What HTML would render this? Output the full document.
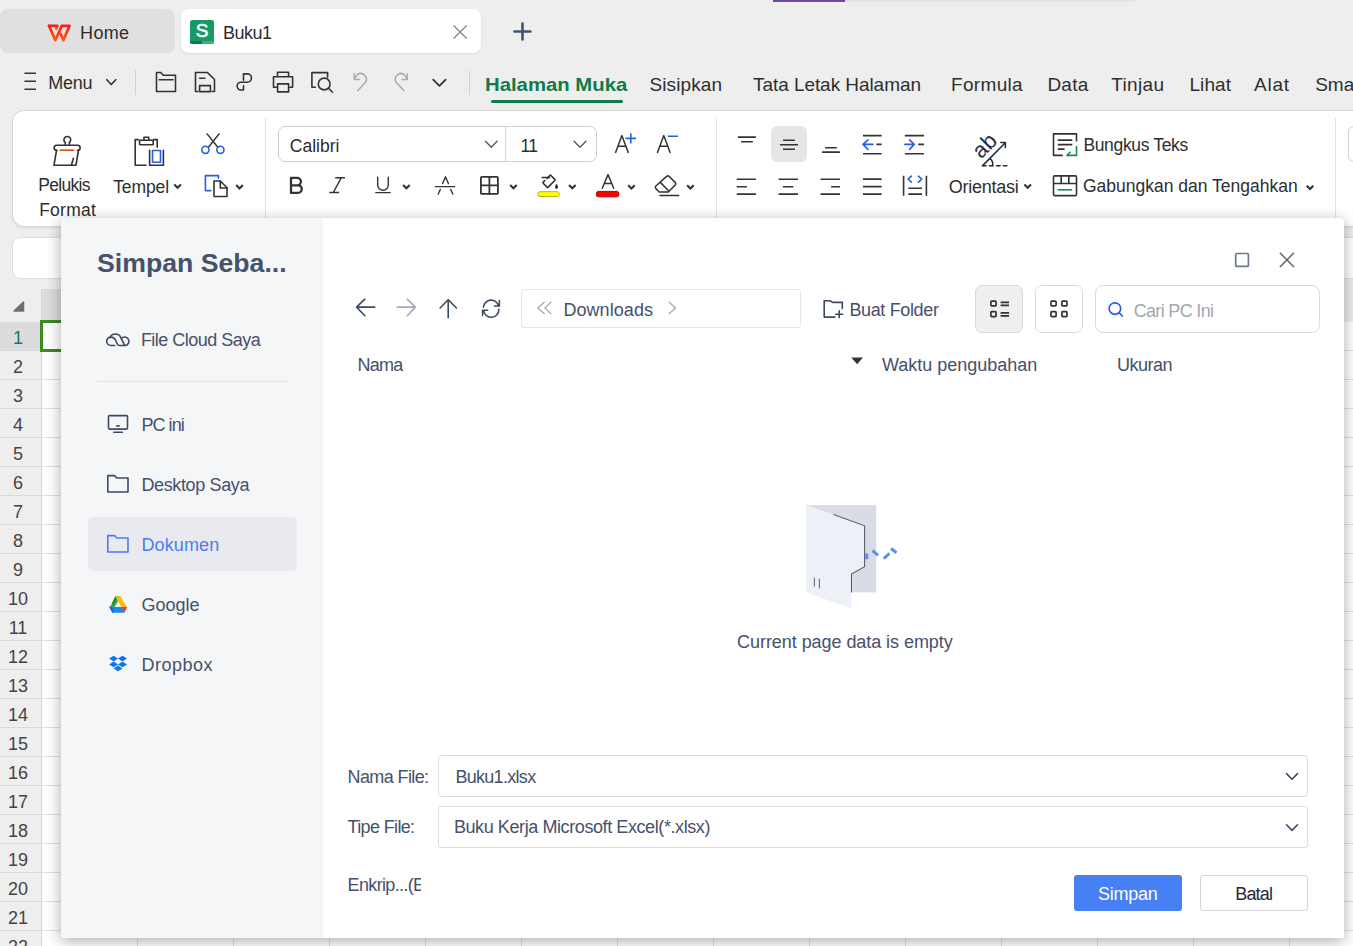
<!DOCTYPE html>
<html><head><meta charset="utf-8">
<style>
*{margin:0;padding:0;box-sizing:border-box}
html,body{width:1353px;height:946px;overflow:hidden;background:#eeeeee;font-family:"Liberation Sans",sans-serif;position:relative}
.t{position:absolute;white-space:nowrap}
.a{position:absolute}
svg{position:absolute;overflow:visible}
</style></head><body>
<!-- top progress bar -->
<div class="a" style="left:773px;top:0;width:72px;height:2px;background:#7048a8"></div>
<div class="a" style="left:845px;top:0;width:290px;height:2px;background:#e2e2e2"></div>
<!-- tabs -->
<div class="a" style="left:0;top:9px;width:175px;height:44px;background:#e0e0e0;border-radius:8px"></div>
<div class="a" style="left:181px;top:9px;width:300px;height:44px;background:#fff;border-radius:8px;box-shadow:0 1px 2px rgba(0,0,0,.08)"></div>
<!-- ribbon -->
<div class="a" style="left:12px;top:110px;width:1400px;height:117px;background:#fff;border-radius:12px;border:1px solid #d8d8d8;box-shadow:0 1px 2px rgba(0,0,0,.08)"></div>
<div class="a" style="left:265px;top:118px;width:1px;height:100px;background:#e3e3e3"></div>
<div class="a" style="left:716px;top:118px;width:1px;height:100px;background:#e3e3e3"></div>
<div class="a" style="left:1335px;top:118px;width:1px;height:100px;background:#e3e3e3"></div>
<div class="a" style="left:1348px;top:126px;width:30px;height:36px;border:1px solid #d0d0d0;border-radius:6px"></div>
<!-- font boxes -->
<div class="a" style="left:278px;top:126px;width:319px;height:36px;border:1px solid #cfcfcf;border-radius:7px;background:#fff"></div>
<div class="a" style="left:505px;top:127px;width:1px;height:34px;background:#d6d6d6"></div>
<div class="a" style="left:771px;top:126px;width:36px;height:36px;background:#e6e6e6;border-radius:6px"></div>
<!-- formula bar -->
<div class="a" style="left:12px;top:237px;width:1400px;height:42px;background:#fff;border-radius:8px;border:1px solid #dedede"></div>
<!-- sheet -->
<div class="a" style="left:0;top:289px;width:1353px;height:33px;background:#eeeeee"></div>
<div class="a" style="left:42px;top:289px;width:96px;height:33px;background:#dcdcdc"></div>
<div class="a" style="left:0;top:322px;width:42px;height:624px;background:#eeeeee"></div>
<div class="a" style="left:0;top:322px;width:42px;height:29px;background:#dcdcdc"></div>
<div class="a" style="left:42px;top:322px;width:1311px;height:624px;background:#fff;
background-image:linear-gradient(#e1e1e1 1px,transparent 1px),linear-gradient(90deg,#e1e1e1 1px,transparent 1px);
background-size:96px 29px;background-position:-1px -1px"></div>
<div class="a" style="left:41px;top:289px;width:1px;height:657px;background:#d4d4d4"></div>
<div class="a" style="left:0;top:322px;width:42px;height:624px;
background-image:linear-gradient(#d9d9d9 1px,transparent 1px);background-size:42px 29px;background-position:0 -1px"></div>
<div class="a" style="left:40px;top:320px;width:30px;height:32px;border:3px solid #3c8a22"></div>
<svg style="left:0;top:0" width="1" height="1"></svg>
<svg style="left:13px;top:301px" width="12" height="11"><path d="M10.5 1 L10.5 10 L1 10 Z" fill="#6e6e6e" stroke="#6e6e6e" stroke-width="1.5" stroke-linejoin="round"/></svg>
<div class="t" style="left:13.1px;top:329.0px;font-size:18px;line-height:18px;color:#0e7a6e;letter-spacing:0.00px;">1</div>
<div class="t" style="left:13.1px;top:358.0px;font-size:18px;line-height:18px;color:#444;letter-spacing:0.00px;">2</div>
<div class="t" style="left:13.1px;top:387.0px;font-size:18px;line-height:18px;color:#444;letter-spacing:0.00px;">3</div>
<div class="t" style="left:13.1px;top:416.0px;font-size:18px;line-height:18px;color:#444;letter-spacing:0.00px;">4</div>
<div class="t" style="left:13.1px;top:445.0px;font-size:18px;line-height:18px;color:#444;letter-spacing:0.00px;">5</div>
<div class="t" style="left:13.1px;top:474.0px;font-size:18px;line-height:18px;color:#444;letter-spacing:0.00px;">6</div>
<div class="t" style="left:13.1px;top:503.0px;font-size:18px;line-height:18px;color:#444;letter-spacing:0.00px;">7</div>
<div class="t" style="left:13.1px;top:532.0px;font-size:18px;line-height:18px;color:#444;letter-spacing:0.00px;">8</div>
<div class="t" style="left:13.1px;top:561.0px;font-size:18px;line-height:18px;color:#444;letter-spacing:0.00px;">9</div>
<div class="t" style="left:8.1px;top:590.0px;font-size:18px;line-height:18px;color:#444;letter-spacing:0.00px;">10</div>
<div class="t" style="left:8.7px;top:619.0px;font-size:18px;line-height:18px;color:#444;letter-spacing:0.00px;">11</div>
<div class="t" style="left:8.1px;top:648.0px;font-size:18px;line-height:18px;color:#444;letter-spacing:0.00px;">12</div>
<div class="t" style="left:8.1px;top:677.0px;font-size:18px;line-height:18px;color:#444;letter-spacing:0.00px;">13</div>
<div class="t" style="left:8.1px;top:706.0px;font-size:18px;line-height:18px;color:#444;letter-spacing:0.00px;">14</div>
<div class="t" style="left:8.1px;top:735.0px;font-size:18px;line-height:18px;color:#444;letter-spacing:0.00px;">15</div>
<div class="t" style="left:8.1px;top:764.0px;font-size:18px;line-height:18px;color:#444;letter-spacing:0.00px;">16</div>
<div class="t" style="left:8.1px;top:793.0px;font-size:18px;line-height:18px;color:#444;letter-spacing:0.00px;">17</div>
<div class="t" style="left:8.1px;top:822.0px;font-size:18px;line-height:18px;color:#444;letter-spacing:0.00px;">18</div>
<div class="t" style="left:8.1px;top:851.0px;font-size:18px;line-height:18px;color:#444;letter-spacing:0.00px;">19</div>
<div class="t" style="left:8.1px;top:880.0px;font-size:18px;line-height:18px;color:#444;letter-spacing:0.00px;">20</div>
<div class="t" style="left:8.1px;top:909.0px;font-size:18px;line-height:18px;color:#444;letter-spacing:0.00px;">21</div>
<div class="t" style="left:8.1px;top:938.0px;font-size:18px;line-height:18px;color:#444;letter-spacing:0.00px;">22</div>
<div class="t" style="left:80.1px;top:24.0px;font-size:18px;line-height:18px;color:#2e2e2e;letter-spacing:0.33px;">Home</div>
<div class="t" style="left:223.0px;top:24.0px;font-size:18px;line-height:18px;color:#2e2e2e;letter-spacing:-0.50px;">Buku1</div>
<div class="t" style="left:48.2px;top:74.0px;font-size:18px;line-height:18px;color:#2e2e2e;letter-spacing:-0.20px;">Menu</div>
<div class="t" style="left:485.4px;top:75.0px;font-size:19px;line-height:19px;color:#0f7b4a;letter-spacing:0.00px;font-weight:bold;transform:scaleX(1.0694);transform-origin:0.00px 0;">Halaman Muka</div>
<div class="t" style="left:649.4px;top:75.0px;font-size:19px;line-height:19px;color:#2e2e2e;letter-spacing:0.12px;">Sisipkan</div>
<div class="t" style="left:753.0px;top:75.0px;font-size:19px;line-height:19px;color:#2e2e2e;letter-spacing:-0.06px;">Tata Letak Halaman</div>
<div class="t" style="left:951.0px;top:75.0px;font-size:19px;line-height:19px;color:#2e2e2e;letter-spacing:0.33px;">Formula</div>
<div class="t" style="left:1047.4px;top:75.0px;font-size:19px;line-height:19px;color:#2e2e2e;letter-spacing:0.25px;">Data</div>
<div class="t" style="left:1111.2px;top:75.0px;font-size:19px;line-height:19px;color:#2e2e2e;letter-spacing:0.36px;">Tinjau</div>
<div class="t" style="left:1189.4px;top:75.0px;font-size:19px;line-height:19px;color:#2e2e2e;letter-spacing:0.11px;">Lihat</div>
<div class="t" style="left:1254.0px;top:75.0px;font-size:19px;line-height:19px;color:#2e2e2e;letter-spacing:0.75px;">Alat</div>
<div class="t" style="left:1315.2px;top:75.0px;font-size:19px;line-height:19px;color:#2e2e2e;letter-spacing:0.00px;">Smart</div>
<div class="t" style="left:38.2px;top:177.0px;font-size:17.5px;line-height:17.5px;color:#2e2e2e;letter-spacing:-0.67px;">Pelukis</div>
<div class="t" style="left:39.2px;top:202.0px;font-size:17.5px;line-height:17.5px;color:#2e2e2e;letter-spacing:0.24px;">Format</div>
<div class="t" style="left:113.2px;top:179.0px;font-size:17.5px;line-height:17.5px;color:#2e2e2e;letter-spacing:-0.10px;">Tempel</div>
<div class="t" style="left:289.8px;top:138.0px;font-size:17.5px;line-height:17.5px;color:#2e2e2e;letter-spacing:0.00px;">Calibri</div>
<div class="t" style="left:520.4px;top:138.0px;font-size:17.5px;line-height:17.5px;color:#2e2e2e;letter-spacing:-0.65px;">11</div>
<div class="t" style="left:948.7px;top:178.0px;font-size:18px;line-height:18px;color:#2e2e2e;letter-spacing:-0.25px;">Orientasi</div>
<div class="t" style="left:1083.4px;top:137.0px;font-size:17.5px;line-height:17.5px;color:#2e2e2e;letter-spacing:-0.34px;">Bungkus Teks</div>
<div class="t" style="left:1082.9px;top:178.0px;font-size:17.5px;line-height:17.5px;color:#2e2e2e;letter-spacing:-0.00px;">Gabungkan dan Tengahkan</div>
<svg style="left:0;top:0" width="1353" height="946" viewBox="0 0 1353 946">
<defs>
<linearGradient id="wpsg" x1="0" y1="0" x2="0" y2="1"><stop offset="0" stop-color="#ff1a1a"/><stop offset="1" stop-color="#ff5a12"/></linearGradient>
</defs>
<!-- WPS logo -->
<g fill="none" stroke="url(#wpsg)" stroke-width="2.7" stroke-linejoin="round" stroke-linecap="round">
<path d="M49 25.8 L57.3 25.8 L56.3 28.5"/>
<path d="M49 25.8 L55.3 40.2 L61.8 25.8 L69.6 25.8 L63.4 40.2 L60.6 33.8"/>
</g>
<!-- S icon -->
<rect x="190" y="20" width="24" height="24" rx="2.5" fill="#169a66"/>
<path d="M190 41 H202 V44 H192.5 A2.5 2.5 0 0 1 190 41.5 Z" fill="#0c7849"/>
<path d="M202 41 H214 V41.5 A2.5 2.5 0 0 1 211.5 44 H202 Z" fill="#3dae7f"/>
<text x="202.2" y="37.2" font-family="Liberation Sans" font-size="19" fill="#fff" stroke="#fff" stroke-width="0.6" text-anchor="middle">S</text>
<!-- tab close / plus -->
<path d="M453.6 25.4 L466.6 38.6 M466.6 25.4 L453.6 38.6" stroke="#8a8a8a" stroke-width="1.4" fill="none"/>
<path d="M522.5 23.5 V39.5 M514.5 31.5 H530.5" stroke="#3f5478" stroke-width="2.6" stroke-linecap="round" fill="none"/>

<g fill="none" stroke="#333" stroke-width="1.6" stroke-linejoin="round" stroke-linecap="round">
<!-- hamburger -->
<path d="M24.5 73.3 H36 M24.5 81.3 H36 M24.5 89.2 H36" stroke-linecap="butt"/>
<path d="M106.8 79.7 L111.3 84.5 L115.8 79.7"/>
<!-- folder -->
<path d="M156.5 72.5 H160.8 L163.3 75.3 H175.5 V91.5 H156.5 Z"/>
<path d="M159.2 79.7 H173"/>
<!-- save -->
<path d="M198 91.5 H195.5 V72.5 H207.5 L214.5 79.5 V91.5 H212"/>
<path d="M199.6 78.3 H204.8"/>
<rect x="199.6" y="85.6" width="10.8" height="6"/>
<!-- route -->
<path d="M243.5 80.2 V73.9 H247.3 A4.15 4.15 0 0 1 247.3 82.2 H241 A3.9 3.9 0 0 0 241 90 H243.5 V85.8"/>
<!-- printer -->
<path d="M277.5 76.5 V72.3 H288.6 V76.5"/>
<path d="M276.5 87.3 H273.5 V76.8 H292.6 V87.3 H289.6"/>
<rect x="277.6" y="83.9" width="11" height="8"/>
<!-- preview -->
<path d="M327.6 77.2 V72.6 H311.9 V87.3 H315.3"/>
<circle cx="324.2" cy="84" r="5.9"/>
<path d="M328.5 88.3 L332.5 92.2"/>
<!-- more chevron -->
<path d="M433.2 79.6 L439.4 85.8 L445.6 79.6" stroke-width="1.8"/>
</g>
<!-- undo / redo -->
<g fill="none" stroke="#aaaaaa" stroke-width="1.5" stroke-linecap="round" stroke-linejoin="round">
<path d="M357.8 90.6 L365.3 82.4 A5.6 5.6 0 0 0 357.5 74.6 L354.6 78.2"/>
<path d="M354.3 73.8 V79.4 H359.5"/>
<path d="M403.8 90.6 L396.3 82.4 A5.6 5.6 0 0 1 404.1 74.6 L407 78.2"/>
<path d="M407.3 73.8 V79.4 H402.1"/>
</g>
<rect x="135" y="70" width="1" height="25" fill="#d2d2d2"/>
<rect x="469" y="70.5" width="1" height="24" fill="#d2d2d2"/>
<rect x="491" y="100" width="132" height="3" rx="1.5" fill="#0f7b4a"/>

<!-- ===== ribbon ===== -->
<g fill="none" stroke="#333" stroke-width="1.6" stroke-linejoin="round" stroke-linecap="round">
<!-- brush -->
<path d="M65.3 145.2 V142.6 A3.4 3.4 0 1 1 69.3 142.6 V145.2"/>
<path d="M57 150.3 H56.7 A2.55 2.55 0 0 1 56.7 145.2 H77.6 A2.55 2.55 0 0 1 77.6 150.3 H77.3"/>
<path d="M56.5 150.5 L54 165.2 H76 L78.4 150.5"/>
<path d="M73.4 158.2 L71.4 165"/>
<!-- paste -->
<path d="M138.6 139.6 H135.2 V165.2 H146"/>
<path d="M153.5 139.6 H157.2 V147.3"/>
<path d="M144 140.3 V137.2 H148.8 V140.3"/>
<rect x="139.6" y="140.3" width="13.6" height="4.4" rx="0.8"/>
<path d="M149.6 150.2 V165.2 H163.4 V150.2"/>
<!-- scissors lines -->
<path d="M207.1 133.9 L217.8 147.2 M219.1 133.9 L208.4 147.2" stroke-width="1.5"/>
<!-- copy doc -->
<path d="M214 181 H220.3 L227 187.7 V196.5 H214 Z"/>
<path d="M220.3 181 V188 H227"/>
<!-- small chevrons -->
<path d="M174.30 184.40 L177.60 187.70 L180.90 184.40" stroke-width="2.1" stroke-linecap="butt" stroke-linejoin="miter"/>
<path d="M236.25 185.10 L239.55 188.40 L242.85 185.10" stroke-width="2.1" stroke-linecap="butt" stroke-linejoin="miter"/>
</g>
<g fill="none" stroke="#2b5ce6" stroke-width="1.6" stroke-linejoin="round" stroke-linecap="round">
<rect x="152.5" y="150.5" width="8" height="11.8" stroke-linecap="butt"/>
<circle cx="205.4" cy="149.8" r="3.6"/>
<circle cx="220.4" cy="149.8" r="3.6"/>
<path d="M218.4 178.3 V175.6 H205.4 V190.6 H210.8"/>
</g>
<path d="M59.6 150.2 H74.2" stroke="#d9531e" stroke-width="1.7"/>

<!-- font box chevrons -->
<g fill="none" stroke="#555" stroke-width="1.3" stroke-linejoin="round" stroke-linecap="round">
<path d="M485.5 141.3 L491.3 147.3 L497.1 141.3"/>
<path d="M574 141.3 L580 147.3 L586 141.3"/>
</g>
<g fill="none" stroke="#333" stroke-width="1.5" stroke-linejoin="round" stroke-linecap="round">
<!-- A+ A- -->
<path d="M615.6 152.4 L621.9 135.6 L628.2 152.4 M618 146.3 H625.8"/>
<path d="M657.5 152.4 L663.8 135.6 L670.1 152.4 M659.9 146.3 H667.7"/>
<!-- B -->
<path d="M291 177.9 H297.2 A3.7 3.7 0 0 1 297.2 185.3 H291 Z M291 185.3 H298 A3.8 3.8 0 0 1 298 192.9 H291 Z" stroke-width="2.3"/>
<!-- I -->
<path d="M335.2 177.8 H345 M329.3 192.5 H339.1 M341.2 177.8 L333.3 192.5" stroke-width="1.4" stroke-linecap="butt"/>
<!-- U -->
<path d="M377.7 177.2 V185 A5.3 5.3 0 0 0 388.3 185 V177.2" stroke-width="1.4"/>
<path d="M375.8 192.6 H390.2" stroke-width="1.4"/>
<path d="M403.10 184.90 L406.40 188.20 L409.70 184.90" stroke-width="2.1" stroke-linecap="butt" stroke-linejoin="miter"/>
<!-- strike A -->
<path d="M442.6 183.6 L445.5 176.8 L448.4 183.6 M440.3 189.5 L438.2 194 M450.7 189.5 L452.8 194" stroke-width="1.4"/>
<path d="M435.3 186.6 H454.6" stroke-width="1.4"/>
<!-- grid -->
<rect x="480.9" y="176.9" width="17" height="17" rx="1" stroke-width="1.8"/>
<path d="M489.4 177 V194 M481 185.4 H497.8" stroke-width="1.8"/>
<path d="M510.15 184.90 L513.45 188.20 L516.75 184.90" stroke-width="2.1" stroke-linecap="butt" stroke-linejoin="miter"/>
<!-- bucket -->
<path d="M-3.5 -0.6 V-4.7 A0.8 0.8 0 0 1 -2.7 -5.5 H2.7 A0.8 0.8 0 0 1 3.5 -4.7 V4.7 A0.8 0.8 0 0 1 2.7 5.5 H-2.7 A0.8 0.8 0 0 1 -3.5 4.7 V2.4" transform="translate(549 181.3) rotate(45)" stroke-width="1.6"/>
<path d="M542.2 177.6 H549.6" stroke-width="1.5"/>
<path d="M556.5 183.8 C555.4 185.4 555 186.3 555 187.2 A1.5 1.5 0 0 0 558 187.2 C558 186.3 557.6 185.4 556.5 183.8 Z" fill="#333" stroke="none"/>
<path d="M569.00 184.90 L572.30 188.20 L575.60 184.90" stroke-width="2.1" stroke-linecap="butt" stroke-linejoin="miter"/>
<!-- font color A -->
<path d="M602.3 188.3 L608 174.6 L613.7 188.3 M604.3 183.6 H611.7"/>
<path d="M628.15 185.20 L631.45 188.50 L634.75 185.20" stroke-width="2.1" stroke-linecap="butt" stroke-linejoin="miter"/>
<!-- eraser -->
<path d="M666.6 176.4 A1.8 1.8 0 0 1 669.2 176.4 L675.2 182.4 A1.8 1.8 0 0 1 675.2 185 L668.3 192 H659.3 L655.9 188.6 A1.8 1.8 0 0 1 655.9 186 Z"/>
<path d="M660.8 182.9 L668.6 190.8"/>
<path d="M660 195.6 H678.7"/>
<path d="M687.10 185.20 L690.40 188.50 L693.70 185.20" stroke-width="2.1" stroke-linecap="butt" stroke-linejoin="miter"/>
</g>
<path d="M625.6 138.4 H636 M630.8 133.3 V143.5 M667.8 136.3 H678" stroke="#2b5ce6" stroke-width="1.6" fill="none"/>
<rect x="537.8" y="191.7" width="21.6" height="4.8" rx="2.2" fill="#ffff00" stroke="#b8b800" stroke-width="1"/>
<rect x="596.4" y="191.4" width="22.4" height="5.4" rx="2" fill="#ff0000" stroke="#b80000" stroke-width="1"/>

<!-- alignment -->
<g fill="none" stroke="#333" stroke-width="1.6" stroke-linecap="butt">
<path d="M738 137.1 H755.9 M741.1 141.7 H752.9"/>
<path d="M783 140.2 H794.9 M779.9 144.7 H798 M783 149.3 H794.9"/>
<path d="M825.1 147.7 H836.9 M822 152.1 H840"/>
<path d="M863 135.6 H881.6 M876.3 144.4 H881.6 M863 153.7 H881.6"/>
<path d="M904.8 135.6 H923.9 M918.2 144.4 H923.9 M904.8 153.7 H923.9"/>
<path d="M736.7 179.2 H755.9 M736.7 186.7 H746.9 M736.7 194.1 H755.9"/>
<path d="M778.6 179.2 H798 M783 186.7 H793.4 M778.6 194.1 H798"/>
<path d="M820.6 179.2 H840 M831.1 186.7 H840 M820.6 194.1 H840"/>
<path d="M863 179.1 H881.6 M863 186.6 H881.6 M863 194.1 H881.6"/>
<path d="M903.6 175.8 V195.7 M926.4 175.8 V195.7 M908.3 188.3 H922 M908.3 194.1 H922"/>
</g>
<g fill="none" stroke="#2b5ce6" stroke-width="1.6" stroke-linejoin="round" stroke-linecap="round">
<path d="M872.9 144.4 H863 M868 139.9 L863 144.4 L868 149.4"/>
<path d="M904.8 144.4 H914.2 M909.6 139.9 L914.2 144.4 L909.6 149.4"/>
<path d="M911.4 176.2 L908 179.1 L911.4 182.1 M918.4 176.2 L921.8 179.1 L918.4 182.1"/>
</g>
<!-- orientation -->
<g fill="none" stroke="#1f2a3c" stroke-width="1.5" stroke-linecap="round" stroke-linejoin="round">
<path d="M982.6 165.6 L1005.3 142.8 M1000.8 142.5 H1005.4 V147.4"/>
<path d="M990 158.6 A7 7 0 0 1 992.6 165.6"/>
<path d="M982.5 165.8 H986 M989.6 165.8 H993 M996.6 165.8 H1000 M1003.4 165.8 H1006.8" stroke-width="1.6"/>
</g>
<text x="0" y="0" font-family="Liberation Sans" font-size="22" fill="#1f2a3c" transform="translate(981 159.5) rotate(-45)">ab</text>
<!-- wrap -->
<g fill="none" stroke="#333" stroke-width="1.6" stroke-linejoin="round">
<path d="M1076.5 141.5 V133.9 H1053.5 V155.4 H1062.8"/>
<path d="M1057.8 140.1 H1072.3 M1057.8 144.6 H1072.3 M1057.8 149.1 H1064.6"/>
<rect x="1053.5" y="175.9" width="23" height="19.7" rx="1"/>
<path d="M1053.5 183.5 H1076.5 M1061.2 175.9 V183.5 M1068.8 175.9 V183.5"/>
<path d="M1306.70 185.70 L1310.00 189.00 L1313.30 185.70" stroke-width="2.1" stroke-linecap="butt" stroke-linejoin="miter"/>
<path d="M1024.40 184.50 L1027.70 187.80 L1031.00 184.50" stroke-width="2.1" stroke-linecap="butt" stroke-linejoin="miter"/>
</g>
<g fill="none" stroke="#1a8a55" stroke-width="1.6" stroke-linejoin="round">
<path d="M1076.5 146 V155.4 H1067.3 M1070.5 151.8 L1067 155.4 L1068.5 156"/>
<path d="M1057.7 189.8 H1072.2"/>
</g>
</svg>

<!-- dialog -->
<div class="a" style="left:61px;top:218px;width:1283px;height:720px;background:#fff;border-radius:4px 4px 1px 3px;box-shadow:0 3px 15px rgba(0,0,0,.33);overflow:hidden">
  <div class="a" style="left:0;top:0;width:262px;height:720px;background:#f5f6f8"></div>
</div>
<div class="a" style="left:0;top:0;width:0;height:0">
<!-- sidebar -->
<div class="a" style="left:97px;top:381px;width:191px;height:1px;background:#e1e3e8"></div>
<div class="a" style="left:88px;top:517px;width:209px;height:54px;background:#e8eaef;border-radius:5px"></div>
<!-- toolbar -->
<div class="a" style="left:521px;top:289px;width:280px;height:39px;border:1px solid #e4e6ea;border-radius:3px"></div>
<div class="a" style="left:975px;top:285px;width:48px;height:48px;border:1px solid #d9d9d9;border-radius:7px;background:#efefef"></div>
<div class="a" style="left:1035px;top:285px;width:48px;height:48px;border:1px solid #d9d9d9;border-radius:7px;background:#fff"></div>
<div class="a" style="left:1095px;top:285px;width:225px;height:48px;border:1px solid #d9d9d9;border-radius:8px;background:#fff"></div>
<!-- inputs -->
<div class="a" style="left:438px;top:755px;width:870px;height:42px;border:1px solid #dcdee3;border-radius:3px"></div>
<div class="a" style="left:438px;top:806px;width:870px;height:42px;border:1px solid #dcdee3;border-radius:3px"></div>
<div class="a" style="left:1074px;top:875px;width:108px;height:36px;background:#477ff5;border-radius:3px"></div>
<div class="a" style="left:1200px;top:875px;width:108px;height:36px;border:1px solid #d5d7dc;border-radius:3px;background:#fff"></div>
<div class="a" style="left:340px;top:860px;width:81px;height:40px;overflow:hidden"><div style="position:absolute;left:-340px;top:-860px"><div class="t" style="left:347.6px;top:876.0px;font-size:18px;line-height:18px;color:#46516b;letter-spacing:0.00px;letter-spacing:-0.65px;">Enkrip...(Enkripsi)</div></div></div>
<div class="t" style="left:96.8px;top:250.0px;font-size:26.5px;line-height:26.5px;color:#46516b;letter-spacing:0.00px;font-weight:bold;transform:scaleX(1.0058);transform-origin:0.00px 0;">Simpan Seba...</div>
<div class="t" style="left:140.9px;top:331.0px;font-size:18px;line-height:18px;color:#46516b;letter-spacing:-0.52px;">File Cloud Saya</div>
<div class="t" style="left:141.4px;top:416.0px;font-size:18px;line-height:18px;color:#46516b;letter-spacing:-0.94px;">PC ini</div>
<div class="t" style="left:141.4px;top:476.0px;font-size:18px;line-height:18px;color:#46516b;letter-spacing:-0.36px;">Desktop Saya</div>
<div class="t" style="left:141.4px;top:536.0px;font-size:18px;line-height:18px;color:#4d7cf2;letter-spacing:0.12px;">Dokumen</div>
<div class="t" style="left:141.4px;top:596.0px;font-size:18px;line-height:18px;color:#46516b;letter-spacing:0.00px;">Google</div>
<div class="t" style="left:141.4px;top:656.0px;font-size:18px;line-height:18px;color:#46516b;letter-spacing:0.50px;">Dropbox</div>
<div class="t" style="left:563.4px;top:301.0px;font-size:18px;line-height:18px;color:#46516b;letter-spacing:0.07px;">Downloads</div>
<div class="t" style="left:849.4px;top:301.0px;font-size:18px;line-height:18px;color:#46516b;letter-spacing:-0.35px;">Buat Folder</div>
<div class="t" style="left:1133.7px;top:302.0px;font-size:18px;line-height:18px;color:#a3a7ae;letter-spacing:-0.67px;">Cari PC Ini</div>
<div class="t" style="left:357.6px;top:356.0px;font-size:18px;line-height:18px;color:#46516b;letter-spacing:-0.82px;">Nama</div>
<div class="t" style="left:881.9px;top:356.0px;font-size:18px;line-height:18px;color:#46516b;letter-spacing:0.00px;">Waktu pengubahan</div>
<div class="t" style="left:1116.9px;top:356.0px;font-size:18px;line-height:18px;color:#46516b;letter-spacing:-0.50px;">Ukuran</div>
<div class="t" style="left:737.1px;top:633.0px;font-size:18px;line-height:18px;color:#46516b;letter-spacing:-0.06px;">Current page data is empty</div>
<div class="t" style="left:347.6px;top:768.0px;font-size:18px;line-height:18px;color:#46516b;letter-spacing:-0.62px;">Nama File:</div>
<div class="t" style="left:455.4px;top:768.0px;font-size:18px;line-height:18px;color:#46516b;letter-spacing:-0.70px;">Buku1.xlsx</div>
<div class="t" style="left:347.6px;top:818.0px;font-size:18px;line-height:18px;color:#46516b;letter-spacing:-0.65px;">Tipe File:</div>
<div class="t" style="left:453.9px;top:818.0px;font-size:18px;line-height:18px;color:#46516b;letter-spacing:-0.41px;">Buku Kerja Microsoft Excel(*.xlsx)</div>
<div class="t" style="left:1097.9px;top:885.0px;font-size:18px;line-height:18px;color:#ffffff;letter-spacing:-0.22px;">Simpan</div>
<div class="t" style="left:1235.2px;top:885.0px;font-size:18px;line-height:18px;color:#262a33;letter-spacing:-0.80px;">Batal</div>
<svg style="left:0;top:0" width="1353" height="946" viewBox="0 0 1353 946">
<g fill="none" stroke="#3e4a63" stroke-width="1.6" stroke-linejoin="round" stroke-linecap="round">
<!-- cloud -->
<path d="M114.7 345.5 H110.9 A4.2 4.2 0 0 1 110.9 337.1 C113.5 337.1 115 338.6 116 341 L117.2 343.8 C117.7 345 118.5 345.5 119.6 345.5 H125.3 A4.25 4.25 0 1 0 121.3 338.7"/>
<path d="M109.9 337.6 A6 6 0 0 1 120.9 337.7 L124.6 345.4"/>
<!-- PC -->
<rect x="108.5" y="415.6" width="19" height="13.5" rx="1"/>
<path d="M113.8 432.3 H122.4"/>
<path d="M117 425.9 H119" stroke-width="1.8"/>
<!-- desktop folder -->
<path d="M107.8 475.6 H114.5 L116.8 478 H128 V492 H107.8 Z"/>
<!-- toolbar arrows -->
<path d="M374.8 307.1 H356.6 M364.8 299.1 L356.6 307.1 L364.8 315.7"/>
<path d="M448.2 317.8 V299.8 M440.1 308 L448.2 299.8 L456.5 308"/>
<!-- refresh -->
<path d="M483.4 307.2 A7.7 7.7 0 0 1 498.6 306.2 M499.4 300.6 V306 H494.4"/>
<path d="M498.8 309.2 A7.5 7.5 0 0 1 483.6 310.2 M482.6 315.6 V310.2 H487.6"/>
<!-- new folder -->
<path d="M835 317.1 H824.2 V300.7 H830 L832.7 302.4 H842.3 V308.6"/>
<path d="M839.2 310.8 V317.6 M835.8 314.2 H842.6"/>
<!-- select chevrons -->
<path d="M1286.6 773.6 L1292 779.2 L1297.5 773.6"/>
<path d="M1286.6 824.8 L1292 830.4 L1297.5 824.8"/>
</g>
<path d="M397.2 307.1 H415.4 M407.3 299.1 L415.4 307.1 L407.3 315.7" fill="none" stroke="#a3aaba" stroke-width="1.6" stroke-linejoin="round" stroke-linecap="round"/>
<!-- dokumen folder blue -->
<path d="M107.8 535.6 H114.5 L116.8 538 H128 V552 H107.8 Z" fill="none" stroke="#4d7cf2" stroke-width="1.6" stroke-linejoin="round"/>
<!-- breadcrumbs -->
<g fill="none" stroke="#a3a7ae" stroke-width="1.3" stroke-linejoin="round" stroke-linecap="round">
<path d="M544.2 302.3 L537.9 307.9 L544.2 313.6 M550.8 302.3 L544.9 307.9 L550.8 313.6"/>
<path d="M669.2 302.3 L675.5 307.9 L669.2 313.6" stroke="#a3aaba"/>
</g>
<!-- view icons -->
<g fill="none" stroke="#333" stroke-width="1.7" stroke-linejoin="round">
<rect x="990.9" y="301.2" width="5.2" height="4.7" rx="0.8"/>
<rect x="990.9" y="311.7" width="5.2" height="4.9" rx="0.8"/>
<path d="M1000.6 302.4 H1009 M1000.6 305.4 H1009 M1000.6 312.8 H1009 M1000.6 315.9 H1009"/>
<rect x="1051" y="301.2" width="5.1" height="4.7" rx="0.8"/>
<rect x="1061.9" y="301.2" width="5.1" height="4.7" rx="0.8"/>
<rect x="1051" y="311.7" width="5.1" height="4.9" rx="0.8"/>
<rect x="1061.9" y="311.7" width="5.1" height="4.9" rx="0.8"/>
</g>
<!-- search -->
<circle cx="1114.9" cy="308.6" r="5.8" fill="none" stroke="#2b5ce6" stroke-width="1.7"/>
<path d="M1119.2 312.9 L1122.5 316" stroke="#2b5ce6" stroke-width="1.7" stroke-linecap="round"/>
<!-- max / close -->
<rect x="1235.7" y="253.5" width="12.7" height="12.9" rx="1" fill="none" stroke="#6b7894" stroke-width="1.7"/>
<path d="M1279.9 252.8 L1294 267 M1294 252.8 L1279.9 267" stroke="#666" stroke-width="1.5"/>
<!-- sort triangle -->
<path d="M851.3 357.6 H863 L857.15 364.3 Z" fill="#333"/>
<!-- google drive -->
<g>
<path d="M115.3 596.6 H120.7 L114 608.2 L110.4 606.4 Z" fill="#34a853"/>
<path d="M115.3 596.6 L118 596.6 L113.2 604.8 L111.8 603.9 Z" fill="#188038"/>
<path d="M115.3 596.6 H120.7 L127 607.4 H121.6 Z" fill="#fbbc04"/>
<path d="M109 606.3 L111.8 611.8 A1.5 1.5 0 0 0 113.1 612.7 H124.7 L122 606.9 H109.4 Z" fill="#1e88e5"/>
<path d="M109 606.3 L112.1 606.9 L113.9 612.7 H113.1 A1.5 1.5 0 0 1 111.8 611.8 Z" fill="#1967d2"/>
<path d="M121.6 606.9 H127.2 L124.6 612.6 Z" fill="#ea4335"/>
</g>
<!-- dropbox -->
<g fill="#0f74e8">
<path d="M113.6 655.7 L109.1 658.6 L113.6 661.5 L118.1 658.6 Z"/>
<path d="M122.5 655.7 L118 658.6 L122.5 661.5 L127 658.6 Z"/>
<path d="M113.6 661.5 L109.1 664.4 L113.6 667.3 L118.1 664.4 Z"/>
<path d="M122.5 661.5 L118 664.4 L122.5 667.3 L127 664.4 Z"/>
<path d="M118 665.5 L113.6 668.4 L118 671.3 L122.5 668.4 Z"/>
</g>
<!-- empty illustration -->
<rect x="806.7" y="505.1" width="69.5" height="87.3" fill="#d9dce4"/>
<path d="M806.7 505.1 L833.5 514.5 L864.6 525.8 V566.7 L851.5 574 V608.5 L806.7 592.4 Z" fill="#eef0f8"/>
<path d="M833.5 514.5 L864.6 525.8 V566.7 L851.5 574 V592.4" fill="none" stroke="#5a5f6a" stroke-width="1.1"/>
<path d="M814.4 577.4 V586.4 M819.4 578.8 V588.4" fill="none" stroke="#6a6f7a" stroke-width="1.1"/>
<g fill="none" stroke="#5b8ff9" stroke-width="3">
<path d="M866.8 553.5 V559.3"/>
<path d="M872.5 550.5 L878 555.3"/>
<path d="M883.7 558.6 L889.5 553.3"/>
<path d="M891 548.5 L896.5 552.8"/>
</g>
</svg>

</div>
</body></html>
